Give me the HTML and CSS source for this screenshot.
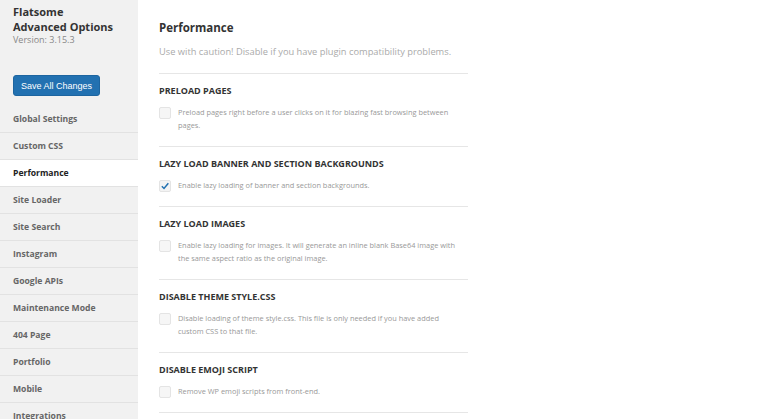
FILE: index.html
```html
<!DOCTYPE html>
<html lang="en">
<head>
    <meta charset="UTF-8">
    <meta name="viewport" content="width=device-width, initial-scale=1.0">
    <title>Flatsome Advanced Options</title>
    <link rel="stylesheet" href="styles.css">
</head>
<body>
    <div class="layout">
        <aside class="sidebar">
            <div class="brand">
                <h1>Flatsome<br>Advanced Options</h1>
                <div class="version">Version: 3.15.3</div>
            </div>
            <button class="save">Save All Changes</button>
            <ul class="nav">
                <li>Global Settings</li>
                <li>Custom CSS</li>
                <li class="active">Performance</li>
                <li>Site Loader</li>
                <li>Site Search</li>
                <li>Instagram</li>
                <li>Google APIs</li>
                <li>Maintenance Mode</li>
                <li>404 Page</li>
                <li>Portfolio</li>
                <li>Mobile</li>
                <li>Integrations</li>
            </ul>
        </aside>

        <main class="content">
            <h2>Performance</h2>
            <p class="intro">Use with caution! Disable if you have plugin compatibility problems.</p>

            <div class="option">
                <h3>Preload pages</h3>
                <label><span class="box"></span><span>Preload pages right before a user clicks on it for blazing fast browsing between pages.</span></label>
            </div>
            <div class="option">
                <h3>Lazy load banner and section backgrounds</h3>
                <label><span class="box checked"><svg viewBox="0 0 12 12" width="10" height="10"><path d="M2.2 6.4 L4.8 9 L10 2.6" fill="none" stroke="#2271b1" stroke-width="1.8"/></svg></span><span>Enable lazy loading of banner and section backgrounds.</span></label>
            </div>
            <div class="option">
                <h3>Lazy load images</h3>
                <label><span class="box"></span><span>Enable lazy loading for images. It will generate an inline blank Base64 image with the same aspect ratio as the original image.</span></label>
            </div>
            <div class="option">
                <h3>Disable theme style.css</h3>
                <label><span class="box"></span><span>Disable loading of theme style.css. This file is only needed if you have added custom CSS to that file.</span></label>
            </div>
            <div class="option">
                <h3>Disable emoji script</h3>
                <label><span class="box"></span><span>Remove WP emoji scripts from front-end.</span></label>
            </div>
        </main>
    </div>
</body>
</html>
```

FILE: styles.css
```css
body {
    margin: 0;
    font-family: "Open Sans", sans-serif;
    background: #fff;
    color: #333;
}
.layout {
    display: flex;
    min-height: 100vh;
}
.sidebar {
    width: 138px;
    flex-shrink: 0;
    background: #f1f1f1;
}
.brand {
    padding: 5px 13px 0;
}
.brand h1 {
    margin: 0;
    font-size: 11px;
    line-height: 14.5px;
    font-weight: 700;
    color: #333;
}
.version {
    font-size: 9px;
    line-height: 12px;
    color: #888;
}
.save {
    margin: 29px 0 0 13px;
    padding: 0 7px;
    height: 21px;
    border: 1px solid #1d65a0;
    border-radius: 3px;
    background: #2271b1;
    color: #fff;
    font-family: "Liberation Sans", Arial, sans-serif;
    font-size: 9px;
}
.nav {
    list-style: none;
    margin: 10px 0 0;
    padding: 0;
}
.nav li {
    height: 26px;
    line-height: 26px;
    padding-left: 13px;
    font-size: 8.6px;
    font-weight: 700;
    color: #666;
    border-bottom: 1px solid #e2e2e2;
}
.nav li.active {
    background: #fff;
    color: #222;
}
.content {
    padding: 18px 0 0 21px;
    width: 309px;
}
.content h2 {
    margin: 0;
    font-size: 11.5px;
    line-height: 20px;
    font-weight: 700;
    color: #333;
}
.intro {
    margin: 7px 0 0;
    padding-bottom: 14px;
    font-size: 9.3px;
    line-height: 14px;
    white-space: nowrap;
    color: #aaa;
    border-bottom: 1px solid #e6e6e6;
}
.option {
    padding: 10px 0 14px;
    border-bottom: 1px solid #e6e6e6;
}
.option h3 {
    margin: 0 0 8px;
    font-size: 9px;
    line-height: 14px;
    font-weight: 700;
    text-transform: uppercase;
    color: #333;
}
.option label {
    display: flex;
    gap: 7px;
    padding-right: 11px;
    font-size: 7.4px;
    line-height: 13px;
    color: #999;
}
.box {
    flex-shrink: 0;
    width: 10px;
    height: 10px;
    margin-top: 1px;
    border: 1px solid #e4e4e4;
    border-radius: 2px;
    background: #f6f6f6;
    display: flex;
    align-items: center;
    justify-content: center;
}
.box.checked {
    background: #f3f3f3;
}
```
